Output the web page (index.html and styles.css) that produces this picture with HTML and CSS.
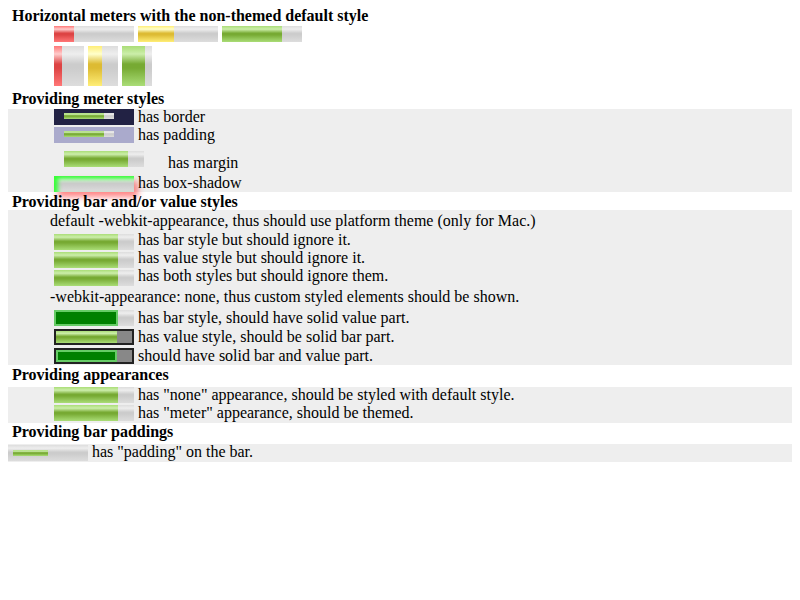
FILE: index.html
```html
<!DOCTYPE html>
<html>
<head>
<meta charset="utf-8">
<link rel="stylesheet" href="styles.css">
</head>
<body>
<h2 class="head">Horizontal meters with the non-themed default style</h2>
<div class="meters hrow">
  <span class="m"><span class="v red" style="width:25%"></span></span>
  <span class="m"><span class="v yellow" style="width:45%"></span></span>
  <span class="m"><span class="v green" style="width:75%"></span></span>
</div>
<div class="meters vrow">
  <span class="m vert"><span class="v red" style="width:27%"></span></span>
  <span class="m vert"><span class="v yellow" style="width:47%"></span></span>
  <span class="m vert"><span class="v green" style="width:77%"></span></span>
</div>
<h2 class="head">Providing meter styles</h2>
<div class="grey">
  <div class="row ind"><span class="m bordered"><span class="inner"><span class="v green" style="width:80%"></span></span></span><span class="t">has border</span></div>
  <div class="row ind"><span class="m padded"><span class="inner"><span class="v green" style="width:80%"></span></span></span><span class="t">has padding</span></div>
  <div class="row ind rmargin"><span class="m margined"><span class="v green" style="width:80%"></span></span><span class="t">has margin</span></div>
  <div class="row ind rshadow"><span class="m shadowed"></span><span class="t">has box-shadow</span></div>
</div>
<h2 class="head h3">Providing bar and/or value styles</h2>
<div class="grey g3">
  <div class="row tind">default -webkit-appearance, thus should use platform theme (only for Mac.)</div>
  <div class="row ind mr"><span class="m"><span class="v green" style="width:80%"></span></span><span class="t">has bar style but should ignore it.</span></div>
  <div class="row ind mr"><span class="m"><span class="v green" style="width:80%"></span></span><span class="t">has value style but should ignore it.</span></div>
  <div class="row ind mr"><span class="m"><span class="v green" style="width:80%"></span></span><span class="t">has both styles but should ignore them.</span></div>
  <div class="row tind t2">-webkit-appearance: none, thus custom styled elements should be shown.</div>
  <div class="row ind cr"><span class="m"><span class="v solid" style="width:80%"></span></span><span class="t">has bar style, should have solid value part.</span></div>
  <div class="row ind cr"><span class="m darkbar"><span class="v green" style="width:80%"></span></span><span class="t">has value style, should be solid bar part.</span></div>
  <div class="row ind cr"><span class="m darkbar"><span class="v solid" style="width:80%"></span></span><span class="t">should have solid bar and value part.</span></div>
</div>
<h2 class="head h4">Providing appearances</h2>
<div class="grey">
  <div class="row ind"><span class="m"><span class="v green" style="width:80%"></span></span><span class="t">has "none" appearance, should be styled with default style.</span></div>
  <div class="row ind"><span class="m"><span class="v green" style="width:80%"></span></span><span class="t">has "meter" appearance, should be themed.</span></div>
</div>
<h2 class="head h5">Providing bar paddings</h2>
<div class="grey">
  <div class="row rpad"><span class="m barpad"><span class="v green" style="width:50%"></span></span><span class="t">has "padding" on the bar.</span></div>
</div>
</body>
</html>
```

FILE: styles.css
```css
body {
  margin: 8px;
  font-family: "Liberation Serif", "Times New Roman", serif;
  font-size: 16px;
  color: #000;
  background: #fff;
}
.head {
  box-sizing: border-box;
  height: 18px;
  font-size: 16px;
  line-height: 16px;
  font-weight: bold;
  margin: 0;
  padding-left: 4px;
}
.h3 { padding-top: 2px; }
.h4 { height: 22px; padding-top: 2px; }
.h5 { height: 21px; padding-top: 1px; }

.meters {
  display: flex;
  align-items: flex-start;
  gap: 4px;
  padding-left: 46px;
}
.hrow { height: 20px; }
.vrow { height: 45px; }

.grey {
  background: #eee;
}
.g3 { padding-bottom: 2px; }

.row {
  display: flex;
  align-items: flex-start;
  box-sizing: border-box;
  height: 18px;
  line-height: 16px;
  white-space: pre;
}
.ind { padding-left: 46px; }
.tind { padding-left: 42px; height: 21px; padding-top: 3px; }
.t2 { padding-top: 4px; }
.row > .m { margin-right: 4px; flex: none; }

.rmargin { height: 30px; }
.rmargin .t { margin-top: 10px; }
.rshadow { height: 17px; }
.rshadow .m { margin-top: 1px; }

.mr .m { margin-top: 3px; }
.mr .t { margin-top: 1px; }
.cr { height: 19px; }
.cr .m { margin-top: 4px; }
.cr .t { margin-top: 4px; }

.rpad .m { margin-top: 1px; }

.m {
  display: block;
  box-sizing: border-box;
  width: 80px;
  height: 16px;
  background: linear-gradient(to bottom, #ddd, #eee 20%, #ccc 45%, #ccc 55%, #ddd);
  overflow: hidden;
}
.m.vert {
  width: 30px;
  height: 40px;
}
.v {
  display: block;
  height: 100%;
  box-sizing: border-box;
}
.red { background: linear-gradient(to bottom, #f77, #fcc 20%, #d44 45%, #d44 55%, #f77); }
.yellow { background: linear-gradient(to bottom, #fe7, #ffc 20%, #db3 45%, #db3 55%, #fe7); }
.green { background: linear-gradient(to bottom, #ad7, #cea 20%, #7a3 45%, #7a3 55%, #ad7); }

.bordered {
  background: #224;
  padding: 4px 20px 6px 10px;
}
.padded {
  background: #aac;
  padding: 4px 20px 6px 10px;
}
.inner {
  display: block;
  height: 100%;
  background: linear-gradient(to bottom, #ddd, #eee 20%, #ccc 45%, #ccc 55%, #ddd);
}
.row > .m.margined {
  margin: 6px 24px 0 10px;
}
.shadowed {
  box-shadow: inset 4px 3px 4px #3f3, 4px 5px 6px rgba(255, 70, 70, 0.65);
  overflow: visible;
}
.solid {
  background: #008000;
  border: 2px solid #6c6;
}
.darkbar {
  background: #888;
  border: 2px solid #222;
}
.barpad {
  padding: 5px 5px 5px 5px;
}
```
